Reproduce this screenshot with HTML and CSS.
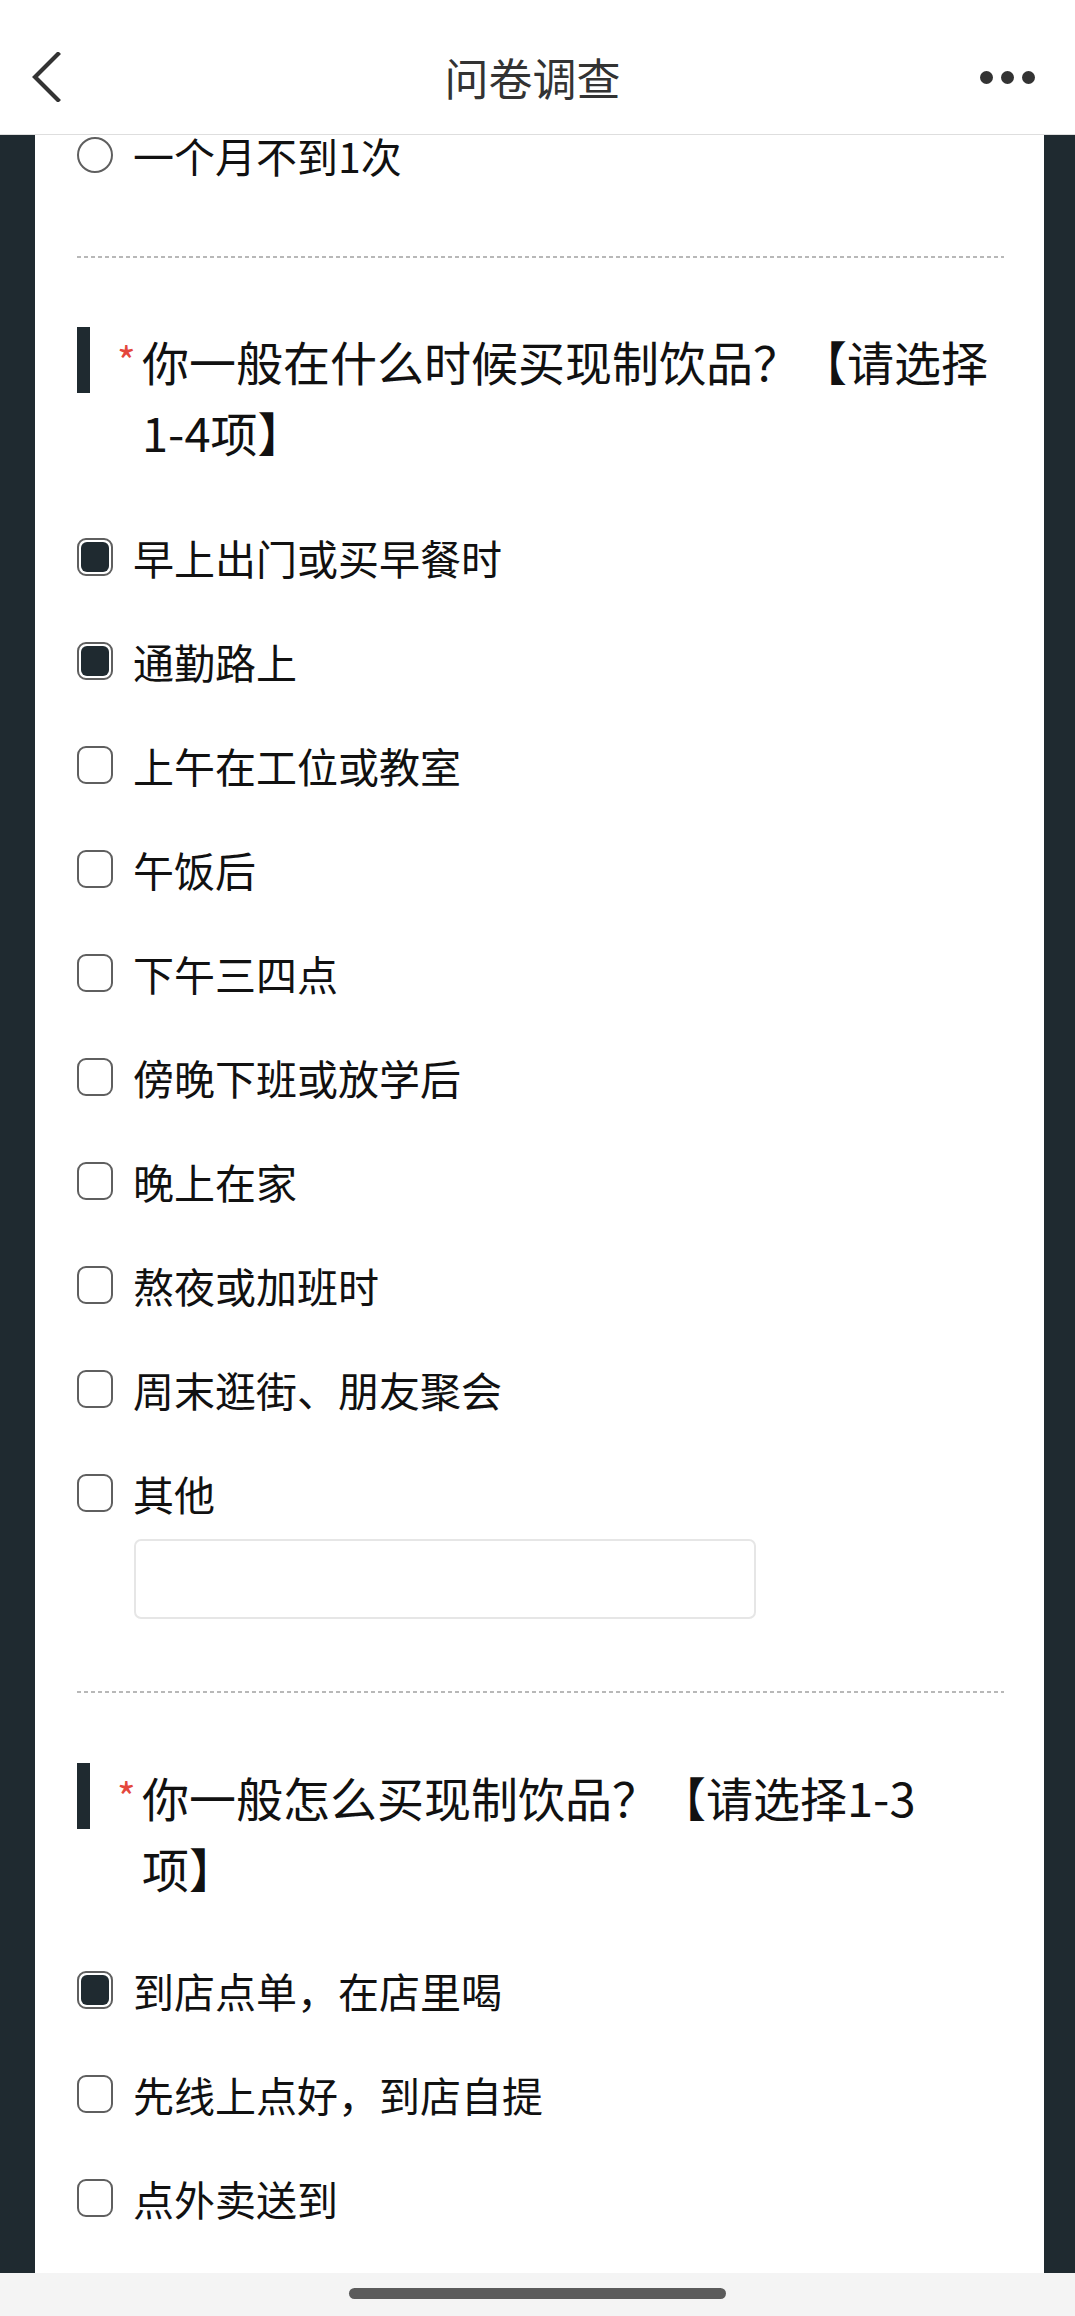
FILE: index.html
```html
<!DOCTYPE html>
<html lang="zh-CN">
<head>
    <meta charset="UTF-8">
    <meta name="viewport" content="width=device-width, initial-scale=1.0">
    <title>问卷调查</title>
    <link rel="stylesheet" href="styles.css">
</head>
<body>
    <header class="topbar">
        <button class="back-btn" aria-label="返回">
            <svg width="30" height="50" viewBox="0 0 30 50">
                <path d="M26 2 L3 25 L26 48" fill="none" stroke="#333" stroke-width="4.2" stroke-linecap="square" stroke-linejoin="miter"/>
            </svg>
        </button>
        <h1 class="topbar-title">问卷调查</h1>
        <div class="more-btn">
            <span></span><span></span><span></span>
        </div>
    </header>

    <main class="page">
        <div class="sheet">
            <!-- previous question, scrolled mostly out of view -->
            <div class="option first">
                <span class="radio"></span>
                <span class="option-text">一个月不到1次</span>
            </div>

            <div class="divider"></div>

            <section class="question">
                <h2 class="q-title">
                    <span class="q-bar"></span>
                    <span class="q-req">*</span>
                    <span class="q-text">你一般在什么时候买现制饮品？【请选择1-4项】</span>
                </h2>
                <div class="option-list">
                    <div class="option"><span class="box checked"></span><span class="option-text">早上出门或买早餐时</span></div>
                    <div class="option"><span class="box checked"></span><span class="option-text">通勤路上</span></div>
                    <div class="option"><span class="box"></span><span class="option-text">上午在工位或教室</span></div>
                    <div class="option"><span class="box"></span><span class="option-text">午饭后</span></div>
                    <div class="option"><span class="box"></span><span class="option-text">下午三四点</span></div>
                    <div class="option"><span class="box"></span><span class="option-text">傍晚下班或放学后</span></div>
                    <div class="option"><span class="box"></span><span class="option-text">晚上在家</span></div>
                    <div class="option"><span class="box"></span><span class="option-text">熬夜或加班时</span></div>
                    <div class="option"><span class="box"></span><span class="option-text">周末逛街、朋友聚会</span></div>
                    <div class="option with-input"><span class="box"></span><span class="option-text">其他</span></div>
                    <input type="text" class="other-input">
                </div>
            </section>

            <div class="divider second"></div>

            <section class="question">
                <h2 class="q-title">
                    <span class="q-bar"></span>
                    <span class="q-req">*</span>
                    <span class="q-text">你一般怎么买现制饮品？【请选择1-3项】</span>
                </h2>
                <div class="option-list tight">
                    <div class="option"><span class="box checked"></span><span class="option-text">到店点单，在店里喝</span></div>
                    <div class="option"><span class="box"></span><span class="option-text">先线上点好，到店自提</span></div>
                    <div class="option"><span class="box"></span><span class="option-text">点外卖送到</span></div>
                </div>
            </section>
        </div>
    </main>

    <footer class="home-bar">
        <span class="home-pill"></span>
    </footer>
</body>
</html>
```

FILE: styles.css
```css
* {
    margin: 0;
    padding: 0;
    box-sizing: border-box;
    font-family: "Noto Sans CJK SC", "Noto Sans", sans-serif;
}

body {
    width: 1075px;
    background-color: #1f2a30;
}

/* top navigation */
.topbar {
    position: relative;
    z-index: 1;
    height: 135px;
    padding: 20px 40px 0 30px;
    background-color: #fff;
    border-bottom: 1px solid #dedede;
    display: grid;
    grid-template-columns: 1fr auto 1fr;
    align-items: center;
}

.back-btn {
    justify-self: start;
    width: 34px;
    height: 52px;
    border: none;
    background: none;
    display: flex;
    align-items: center;
    justify-content: center;
}

.topbar-title {
    font-size: 44px;
    font-weight: 400;
    color: #333;
    line-height: 60px;
}

.more-btn {
    justify-self: end;
    display: flex;
    gap: 8px;
}

.more-btn span {
    width: 13px;
    height: 13px;
    border-radius: 50%;
    background-color: #333;
}

/* page body */
.page {
    padding: 0 31px 0 35px;
}

.sheet {
    background-color: #fff;
    padding: 1px 40px 23px 42px;
}

.divider {
    height: 2px;
    margin-top: 82px;
    background: repeating-linear-gradient(to right, #b8b8b8 0 4px, transparent 4px 7px);
}

.divider.second {
    margin-top: 72px;
}

.question {
    padding-top: 67px;
}

.divider.second + .question {
    padding-top: 68px;
}

.q-title {
    display: flex;
    align-items: flex-start;
    font-size: 47px;
    font-weight: 400;
    line-height: 71px;
    color: #111;
}

.q-bar {
    flex: none;
    width: 13px;
    height: 66px;
    margin-top: 2px;
    background-color: #1f2a30;
}

.q-req {
    flex: none;
    width: 25px;
    margin-left: 27px;
    font-size: 40px;
    color: #e4473d;
}

.q-text {
    flex: 1;
    text-spacing-trim: space-all;
}

.option-list {
    margin-top: 38px;
}

.option-list.tight {
    margin-top: 35px;
}

.option {
    display: flex;
    align-items: center;
    gap: 20px;
    padding: 33px 0;
    font-size: 41px;
    line-height: 38px;
    color: #111;
}

.option.first {
    padding: 0;
}

.option.with-input {
    padding-bottom: 0;
}

.option-text {
    white-space: nowrap;
}

.box {
    flex: none;
    width: 36px;
    height: 38px;
    padding: 2px;
    border: 2px solid #5f5f5f;
    border-radius: 9px;
    background-color: #fff;
}

.box.checked::after {
    content: '';
    display: block;
    height: 100%;
    border-radius: 6px;
    background-color: #1f2a30;
}

.radio {
    flex: none;
    width: 36px;
    height: 36px;
    border: 2px solid #5f5f5f;
    border-radius: 50%;
}

.other-input {
    display: block;
    width: 622px;
    height: 80px;
    margin: 27px 0 0 57px;
    border: 2px solid #e6e6e6;
    border-radius: 7px;
    background-color: #fff;
    outline: none;
}

/* iOS home indicator */
.home-bar {
    height: 43px;
    padding-top: 15px;
    background-color: #f4f4f4;
    display: flex;
    justify-content: center;
    align-items: flex-start;
}

.home-pill {
    width: 377px;
    height: 11px;
    border-radius: 6px;
    background-color: #5b5b5b;
}
```
